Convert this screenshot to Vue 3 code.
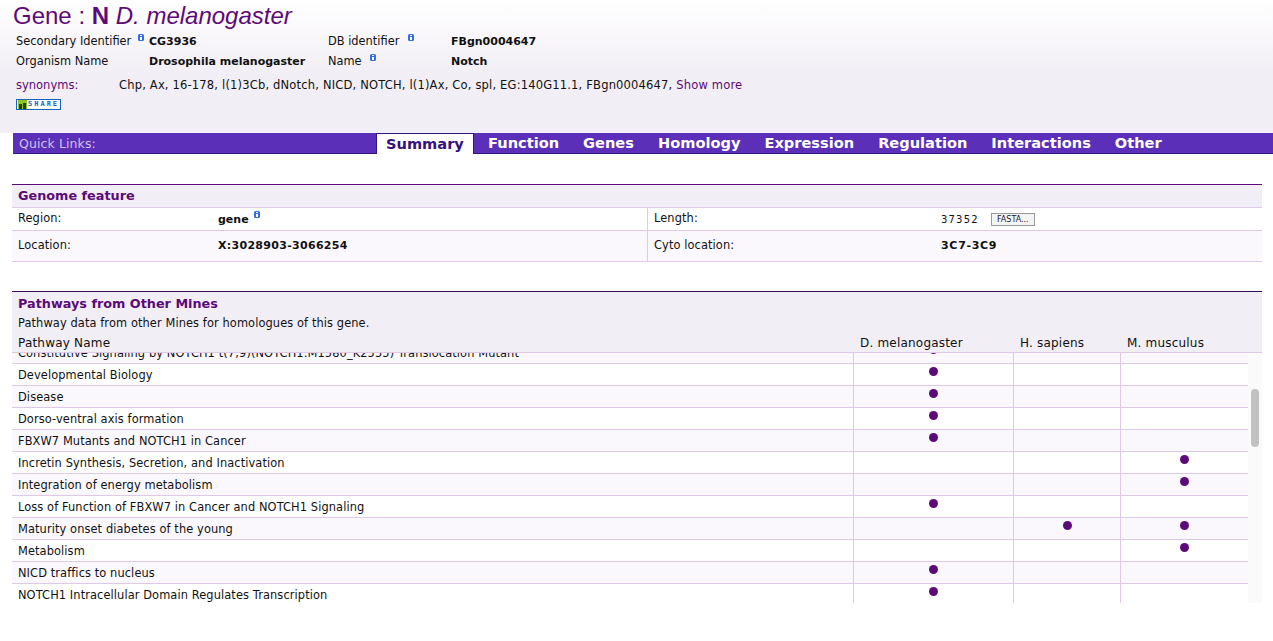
<script setup>
import { onMounted, ref } from "vue";

const tabs = ["Function", "Genes", "Homology", "Expression", "Regulation", "Interactions", "Other"];

// name, then which organisms have the pathway: d / h / m
const pathways = [
  ["Adaptive Immune System", "h"],
  ["Amyloids", "d"],
  ["Axon guidance", "d"],
  ["Beta-catenin phosphorylation cascade", "m"],
  ["Cell-Cell communication", "d"],
  ["Constitutive PI3K/AKT Signaling in Cancer", "d"],
  ["Constitutive Signaling by NOTCH1 HD Domain Mutants", "d"],
  ["Constitutive Signaling by NOTCH1 t(7;9)(NOTCH1:M1580_K2555) Translocation Mutant", "d"],
  ["Developmental Biology", "d"],
  ["Disease", "d"],
  ["Dorso-ventral axis formation", "d"],
  ["FBXW7 Mutants and NOTCH1 in Cancer", "d"],
  ["Incretin Synthesis, Secretion, and Inactivation", "m"],
  ["Integration of energy metabolism", "m"],
  ["Loss of Function of FBXW7 in Cancer and NOTCH1 Signaling", "d"],
  ["Maturity onset diabetes of the young", "hm"],
  ["Metabolism", "m"],
  ["NICD traffics to nucleus", "d"],
  ["NOTCH1 Intracellular Domain Regulates Transcription", "d"],
  ["NOTCH2 Activation and Transmission of Signal", "d"],
  ["NOTCH2 intracellular domain regulates transcription", "d"],
  ["Notch signaling pathway", "dhm"],
  ["Notch-HLH transcription pathway", "d"],
  ["Pathways in cancer", "hm"],
  ["Post-translational protein modification", "d"],
  ["Pre-NOTCH Expression and Processing", "d"],
  ["Pre-NOTCH Processing in Golgi", "d"],
  ["Pre-NOTCH Transcription and Translation", "d"],
  ["Regulation of gene expression in beta cells", "m"],
  ["Signal Transduction", "d"],
  ["Signaling by NOTCH", "d"],
  ["Signaling by NOTCH1", "d"],
  ["Signaling by NOTCH1 HD Domain Mutants in Cancer", "d"],
  ["Signaling by NOTCH1 PEST Domain Mutants in Cancer", "d"],
  ["Signaling by NOTCH2", "d"],
  ["Signaling by NOTCH3", "d"],
  ["Signaling by NOTCH4", "d"],
  ["Signaling by Wnt", "m"],
  ["Transcriptional regulation of pluripotent stem cells", "h"],
  ["Type II diabetes mellitus", "m"],
  ["Tyrosine metabolism", "m"],
  ["Wnt signaling pathway", "dm"],
  ["Wnt ligand biogenesis and trafficking", "d"],
  ["Vesicle-mediated transport", "h"],
  ["Visual phototransduction", "m"],
  ["Viral carcinogenesis", "h"],
  ["Ubiquitin mediated proteolysis", "d"],
  ["mRNA processing", "d"],
  ["tRNA aminoacylation", "m"],
];

const scroller = ref(null);
onMounted(() => {
  scroller.value.scrollTop = 165;
});
</script>

<template>
  <div class="page">
    <header class="gene-head">
      <h1>Gene : <b>N</b> <i>D. melanogaster</i></h1>
      <div class="idents">
        <span>Secondary Identifier <svg class="info up" viewBox="0 0 6 7"><rect width="6" height="7" rx="1.5" fill="#2f6fe0" /><rect x="2" y="1" width="2" height="1" fill="#fff" /><rect x="2" y="3" width="2" height="3" fill="#fff" /></svg></span>
        <b>CG3936</b>
        <span>DB identifier <svg class="info up wide" viewBox="0 0 6 7"><rect width="6" height="7" rx="1.5" fill="#2f6fe0" /><rect x="2" y="1" width="2" height="1" fill="#fff" /><rect x="2" y="3" width="2" height="3" fill="#fff" /></svg></span>
        <b>FBgn0004647</b>
        <span>Organism Name</span>
        <b>Drosophila melanogaster</b>
        <span>Name <svg class="info up wide" viewBox="0 0 6 7"><rect width="6" height="7" rx="1.5" fill="#2f6fe0" /><rect x="2" y="1" width="2" height="1" fill="#fff" /><rect x="2" y="3" width="2" height="3" fill="#fff" /></svg></span>
        <b>Notch</b>
      </div>
      <div class="synonyms">
        <span class="syn-label">synonyms:</span>
        <span>Chp, Ax, 16-178, l(1)3Cb, dNotch, NICD, NOTCH, l(1)Ax, Co, spl, EG:140G11.1, FBgn0004647, <a class="more">Show more</a></span>
      </div>
      <div class="share">
        <svg viewBox="0 0 9 9" width="9" height="9"><rect width="9" height="9" fill="#8fc31f" /><rect x="1" y="4" width="3" height="5" fill="#27401c" /><rect x="5" y="3" width="3" height="6" fill="#27401c" /></svg>
        <span>SHARE</span>
      </div>
    </header>

    <nav class="quick">
      <span class="quick-label">Quick Links:</span>
      <a class="tab active">Summary</a>
      <a v-for="t in tabs" :key="t" class="tab">{{ t }}</a>
    </nav>

    <section class="feature">
      <h2>Genome feature</h2>
      <div class="feat-row first">
        <div class="feat-cell">
          <span class="feat-key">Region:</span>
          <b>gene <svg class="info gene-i" viewBox="0 0 6 7"><rect width="6" height="7" rx="1.5" fill="#2f6fe0" /><rect x="2" y="1" width="2" height="1" fill="#fff" /><rect x="2" y="3" width="2" height="3" fill="#fff" /></svg></b>
        </div>
        <div class="feat-cell right">
          <span class="feat-key">Length:</span>
          <span class="len">37352</span>
          <button class="fasta">FASTA...</button>
        </div>
      </div>
      <div class="feat-row tint">
        <div class="feat-cell">
          <span class="feat-key">Location:</span>
          <b class="wide-b">X:3028903-3066254</b>
        </div>
        <div class="feat-cell right">
          <span class="feat-key">Cyto location:</span>
          <b class="cyto">3C7-3C9</b>
        </div>
      </div>
    </section>

    <section class="pathways">
      <div class="path-head">
        <h2>Pathways from Other Mines</h2>
        <p>Pathway data from other Mines for homologues of this gene.</p>
        <div class="cols">
          <span>Pathway Name</span>
          <span>D. melanogaster</span>
          <span>H. sapiens</span>
          <span>M. musculus</span>
        </div>
      </div>
      <div class="path-body">
        <div ref="scroller" class="scroller">
          <div v-for="(p, i) in pathways" :key="p[0]" class="path-row" :class="{ tint: i % 2 }">
            <div class="name">{{ p[0] }}</div>
            <div class="org"><i v-if="p[1].includes('d')" class="dot"></i></div>
            <div class="org"><i v-if="p[1].includes('h')" class="dot"></i></div>
            <div class="org"><i v-if="p[1].includes('m')" class="dot"></i></div>
          </div>
        </div>
        <div class="track"><div class="thumb"></div></div>
      </div>
    </section>
  </div>
</template>

<style>
html,
body {
  margin: 0;
  background: #fff;
  overflow: hidden;
}
</style>

<style scoped>
.page {
  height: 641px;
  overflow: hidden;
  font-family: "DejaVu Sans", sans-serif;
  font-size: 11.4px;
  letter-spacing: 0.1px;
  color: #111;
}
.page b {
  font-size: 11px;
  letter-spacing: 0;
}
.gene-head {
  height: 133px;
  box-sizing: border-box;
  background: linear-gradient(#fff, #f2eef5 55%);
  padding: 1px 0 0 13px;
}
h1 {
  margin: 0;
  font: 400 24px/30px "Liberation Sans", sans-serif;
  letter-spacing: 0;
  color: #5c0a78;
}
.page h1 b {
  font-size: 24px;
}
.idents {
  display: grid;
  grid-template-columns: 133px 179px 123px auto;
  grid-auto-rows: 20px;
  margin: 1px 0 0 3px;
  line-height: 19px;
  letter-spacing: 0;
}
.info {
  width: 6px;
  height: 7px;
  display: inline-block;
}
.info.up {
  vertical-align: 4px;
  margin-left: 3px;
}
.info.wide {
  margin-left: 5px;
}
.synonyms {
  display: flex;
  margin: 5px 0 0 3px;
  line-height: 16px;
  font-size: 11.5px;
  letter-spacing: 0.18px;
}
.syn-label {
  width: 103px;
  color: #5c0a78;
  letter-spacing: 0;
}
.more {
  color: #5c0a78;
}
.share {
  display: flex;
  align-items: center;
  gap: 1px;
  width: 42px;
  height: 9px;
  margin: 6px 0 0 3px;
  padding: 0 0 0 1px;
  border: 1px solid #1565c0;
  background: #fff;
  color: #1565c0;
  font: 700 7px/9px "DejaVu Sans Mono", monospace;
  letter-spacing: 2px;
}
.quick {
  display: flex;
  align-items: flex-end;
  height: 20px;
  margin-left: 13px;
  background: #5b2fb8;
  border-bottom: 1px solid #2e1580;
  color: #fff;
}
.quick-label {
  width: 363px;
  box-sizing: border-box;
  padding-left: 6px;
  align-self: center;
  font-size: 12.5px;
  color: #cfc3ea;
}
.tab {
  padding: 0 12px;
  font: 700 14.6px/20px "DejaVu Sans", sans-serif;
  letter-spacing: 0;
  height: 20px;
}
.tab.active {
  box-sizing: border-box;
  width: 98px;
  height: 21px;
  margin: 0 2px -1px 0;
  padding: 0 9px;
  background: #fff;
  border: 1px solid #2e1580;
  border-bottom: 0;
  color: #35107e;
}
.feature {
  margin: 30px 11px 0 12px;
  border-top: 1px solid #5c0a78;
}
h2 {
  margin: 0;
  font: 700 12.8px/22px "DejaVu Sans", sans-serif;
  letter-spacing: 0;
  color: #5c0a78;
  padding-left: 6px;
}
.feature h2 {
  background: #f2eef5;
  height: 22px;
  border-bottom: 1px solid #e0c8e8;
}
.feat-row {
  display: grid;
  grid-template-columns: 635px 1fr;
  height: 22px;
  border-bottom: 1px solid #e0c8e8;
}
.feat-row.tint {
  height: 30px;
  background: #fbf8fd;
}
.feat-cell {
  display: flex;
  align-items: center;
  padding-left: 6px;
}
.feat-cell.right {
  border-left: 1px solid #e0c8e8;
}
.feat-key,
.feat-cell b {
  margin-bottom: 2px;
}
.feat-key {
  width: 200px;
}
.right .feat-key {
  width: 287px;
}
.gene-i {
  vertical-align: 5px;
  margin-left: 2px;
}
.page .wide-b {
  letter-spacing: 0.3px;
}
.page .cyto {
  letter-spacing: 0.7px;
}
.len {
  letter-spacing: 1.2px;
  font-size: 10px;
  margin-right: 12px;
}
.fasta {
  box-sizing: border-box;
  width: 44px;
  height: 13px;
  padding: 0;
  border: 1px solid #999;
  background: #f4f4f4;
  font: 8px/11px "DejaVu Sans", sans-serif;
  color: #222;
}
.pathways {
  margin: 29px 11px 0 12px;
  border-top: 1px solid #3a0a55;
}
.path-head {
  height: 59px;
  padding-top: 1px;
  background: #f2eef5;
  border-bottom: 1px solid #e0c8e8;
}
.path-head h2 {
  line-height: 22px;
}
.path-head p {
  margin: 0 0 1px;
  padding-left: 6px;
  line-height: 17px;
}
.cols {
  display: grid;
  grid-template-columns: 842px 160px 107px auto;
  padding-left: 6px;
  line-height: 20px;
  font-size: 12px;
  letter-spacing: 0.2px;
}
.path-body {
  display: flex;
  height: 250px;
}
.scroller {
  width: 1236px;
  overflow: hidden;
}
.path-row {
  display: grid;
  grid-template-columns: 841px 160px 107px 128px;
  grid-template-rows: 21px;
  box-sizing: border-box;
  height: 22px;
  border-bottom: 1px solid #e0c8e8;
}
.path-row.tint {
  background: #fbf8fd;
}
.name {
  padding: 1px 0 0 6px;
  line-height: 21px;
  height: 20px;
  white-space: nowrap;
  overflow: visible;
}
.org {
  border-left: 1px solid #e0c8e8;
  display: flex;
  justify-content: center;
  padding-top: 3px;
}
.dot {
  width: 9px;
  height: 9px;
  border-radius: 50%;
  background: #5c0a78;
}
.track {
  position: relative;
  width: 14px;
  background: #fafafa;
}
.thumb {
  position: absolute;
  top: 36px;
  left: 3px;
  width: 8px;
  height: 58px;
  border-radius: 4px;
  background: #c1c1c1;
}
</style>
